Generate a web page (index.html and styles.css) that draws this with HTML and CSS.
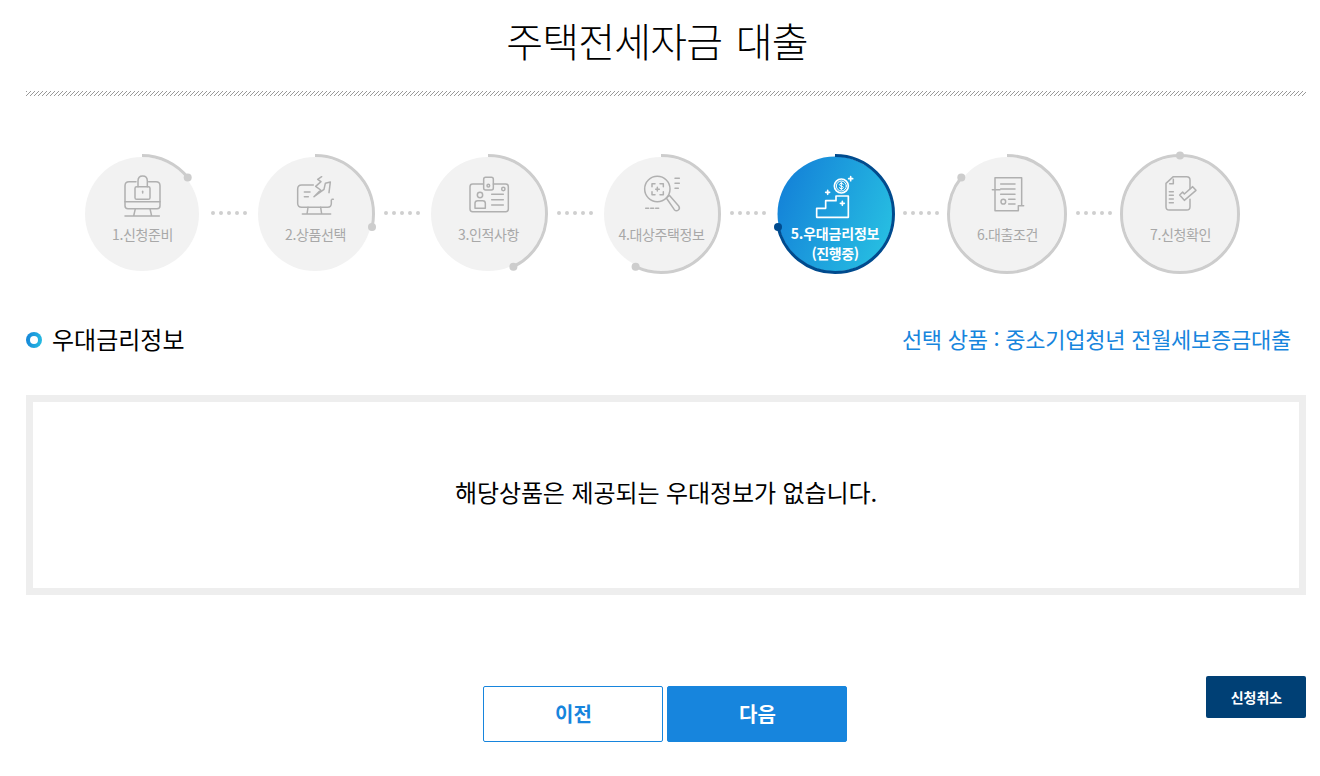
FILE: index.html
```html
<!DOCTYPE html>
<html lang="ko">
<head>
<meta charset="utf-8">
<title>주택전세자금 대출</title>
<link rel="stylesheet" href="styles.css">
</head>
<body>
<main class="page">
  <h1 class="title">주택전세자금 대출</h1>
  <div class="hatch"></div>

  <ol class="steps">
    <li class="step">
      <div class="disc">
        <svg class="ring" viewBox="0 0 120 120">
          <circle class="bg" cx="60" cy="60" r="57"/>
          <circle class="arc" cx="60" cy="60" r="58.5" pathLength="7" stroke-dasharray="1 7" transform="rotate(-90 60 60)"/>
          <circle class="knob" cx="105.7" cy="23.5" r="4"/>
          <svg class="ico" x="0" y="0" width="120" height="120" viewBox="36 42 360 360">
            <path d="M198 125H177q-12 0-12 12V185H270V137q0-12-12-12H236"/>
            <path d="M165 185V197q0 9 9 9H261q9 0 9-9V185"/>
            <path d="M196 206L191 228M240 206L245 228M165 228H268"/>
            <rect x="195" y="140" width="45" height="38" rx="5"/>
            <path d="M204 140V123q0-15 14-15t14 15V140"/>
            <path d="M218 154v5"/>
          </svg>
        </svg>
        <span class="label">1.신청준비</span>
      </div>
      <div class="dots"><i></i><i></i><i></i><i></i><i></i></div>
    </li>
    <li class="step">
      <div class="disc">
        <svg class="ring" viewBox="0 0 120 120">
          <circle class="bg" cx="60" cy="60" r="57"/>
          <circle class="arc" cx="60" cy="60" r="58.5" pathLength="7" stroke-dasharray="2 7" transform="rotate(-90 60 60)"/>
          <circle class="knob" cx="117" cy="73" r="4"/>
          <svg class="ico" x="0" y="0" width="120" height="120" viewBox="555 42 360 360">
            <path d="M730 135H695q-12 0-12 12V190q0 12 12 12H773q11 0 11-12V180"/>
            <path d="M714 202L711 222M752 202L755 222M697 222H782"/>
            <path d="M703 156H720M703 170H715"/>
            <path d="M732 170L752 150L737 139L753 125L743 118L755 110M732 170L762 148L766 130L781 126L777 158"/>
            <path d="M786 178H790"/>
          </svg>
        </svg>
        <span class="label">2.상품선택</span>
      </div>
      <div class="dots"><i></i><i></i><i></i><i></i><i></i></div>
    </li>
    <li class="step">
      <div class="disc">
        <svg class="ring" viewBox="0 0 120 120">
          <circle class="bg" cx="60" cy="60" r="57"/>
          <circle class="arc" cx="60" cy="60" r="58.5" pathLength="7" stroke-dasharray="3 7" transform="rotate(-90 60 60)"/>
          <circle class="knob" cx="85.4" cy="112.7" r="4"/>
          <svg class="ico" x="0" y="0" width="120" height="120" viewBox="24 42 360 360">
            <path d="M190 132H158q-8 0-8 8V207q0 8 8 8H257q8 0 8-8V140q0-8-8-8H220"/>
            <rect x="191" y="112" width="29" height="38" rx="6"/>
            <circle cx="205" cy="137" r="4"/>
            <circle cx="250" cy="147" r="5"/>
            <circle cx="180" cy="165" r="8"/>
            <path d="M165 205V190q0-8 8-8h15q8 0 8 8v15Z"/>
            <path d="M215 163H250M215 179H250M215 195H250"/>
          </svg>
        </svg>
        <span class="label">3.인적사항</span>
      </div>
      <div class="dots"><i></i><i></i><i></i><i></i><i></i></div>
    </li>
    <li class="step step-wide">
      <div class="disc">
        <svg class="ring" viewBox="0 0 120 120">
          <circle class="bg" cx="60" cy="60" r="57"/>
          <circle class="arc" cx="60" cy="60" r="58.5" pathLength="7" stroke-dasharray="4 7" transform="rotate(-90 60 60)"/>
          <circle class="knob" cx="34.6" cy="112.7" r="4"/>
          <svg class="ico" x="0" y="0" width="120" height="120" viewBox="543 42 360 360">
            <circle cx="712" cy="147" r="38"/>
            <path d="M739 174L748 166L776 198q5 7-1 12t-12-1Z"/>
            <path d="M696 140V131H705M720 131H730V140M696 155V164H705M720 164H730V155M707 148H718M712 142V153"/>
            <path d="M765 115H778M765 130H778M765 145H775"/>
            <path d="M677 205H686M692 205H701M707 205H716"/>
          </svg>
        </svg>
        <span class="label">4.대상주택정보</span>
      </div>
      <div class="dots"><i></i><i></i><i></i><i></i><i></i></div>
    </li>
    <li class="step step-narrow step-active">
      <div class="disc">
        <svg class="ring" viewBox="0 0 120 120">
          <defs>
            <linearGradient id="activeFill" x1="0" y1="0.3" x2="1" y2="0.7">
              <stop offset="0" stop-color="#1482d8"/>
              <stop offset="1" stop-color="#27bfe2"/>
            </linearGradient>
          </defs>
          <circle class="bg" cx="60" cy="60" r="57.5"/>
          <circle class="arc" cx="60" cy="60" r="58.5" pathLength="7" stroke-dasharray="5 7" transform="rotate(-90 60 60)"/>
          <circle class="knob" cx="3" cy="73" r="4"/>
          <svg class="ico" x="0" y="0" width="120" height="120" viewBox="45 42 360 360">
            <path d="M170 232V205H197V182H228V168H265V232Z"/>
            <circle cx="244" cy="138" r="21"/>
            <circle class="fine" cx="244" cy="138" r="15"/>
            <path class="fine" d="M250 133q-1-3-6-3t-6 3q0 4 6 5t6 5q0 3-6 3t-6-3M244 127V149"/>
            <path d="M197 157H209M203 151V163M266 116H278M272 110V122M241 190H253M247 184V196"/>
          </svg>
        </svg>
        <span class="label">5.우대금리정보<br><span class="sub">(진행중)</span></span>
      </div>
      <div class="dots"><i></i><i></i><i></i><i></i><i></i></div>
    </li>
    <li class="step">
      <div class="disc">
        <svg class="ring" viewBox="0 0 120 120">
          <circle class="bg" cx="60" cy="60" r="57"/>
          <circle class="arc" cx="60" cy="60" r="58.5" pathLength="7" stroke-dasharray="6 7" transform="rotate(-90 60 60)"/>
          <circle class="knob" cx="14.3" cy="23.5" r="4"/>
          <svg class="ico" x="0" y="0" width="120" height="120" viewBox="561 42 360 360">
            <path d="M705 148V113H785V197M697 149H720M705 149V212H775V197H791"/>
            <path d="M722 132H765M722 147H765M722 163H765"/>
            <circle cx="730" cy="185" r="7"/>
            <path d="M746 178H765M746 192H765"/>
          </svg>
        </svg>
        <span class="label">6.대출조건</span>
      </div>
      <div class="dots"><i></i><i></i><i></i><i></i><i></i></div>
    </li>
    <li class="step">
      <div class="disc">
        <svg class="ring" viewBox="0 0 120 120">
          <circle class="bg" cx="60" cy="60" r="57"/>
          <circle class="arc" cx="60" cy="60" r="58.5"/>
          <circle class="knob" cx="60" cy="1.5" r="4"/>
          <svg class="ico" x="0" y="0" width="120" height="120" viewBox="180 42 360 360">
            <path d="M390 146V120q0-10-10-10H340L318 130V200q0 10 10 10H380q10 0 10-10V178"/>
            <path d="M329 131H340V118"/>
            <path d="M328 155H340M328 166H340M328 177H340M328 188H340"/>
            <path d="M359 165L373 181L408 151L398 140L373 162L368 156Z"/>
          </svg>
        </svg>
        <span class="label">7.신청확인</span>
      </div>
    </li>
  </ol>

  <section class="section">
    <div class="section-head">
      <h2 class="section-title"><span class="bullet"></span>우대금리정보</h2>
      <p class="product">선택 상품 : 중소기업청년 전월세보증금대출</p>
    </div>
    <div class="notice">해당상품은 제공되는 우대정보가 없습니다.</div>
  </section>

  <div class="actions">
    <div class="nav">
      <button class="btn btn-line" type="button">이전</button>
      <button class="btn btn-fill" type="button">다음</button>
    </div>
    <button class="btn-cancel" type="button">신청취소</button>
  </div>
</main>
</body>
</html>
```

FILE: styles.css
```css
* { box-sizing: border-box; }

html, body {
  margin: 0;
  padding: 0;
  background: #fff;
}

body {
  font-family: "Noto Sans CJK KR", "Noto Sans", sans-serif;
  color: #000;
  overflow: hidden;
}

.page {
  width: 1320px;
  height: 776px;
  padding: 0 14px 0 26px;
}

.title {
  margin: 0;
  height: 91px;
  padding: 11px 18px 0 0;
  font-size: 40px;
  line-height: 58px;
  font-weight: 300;
  letter-spacing: -0.8px;
  word-spacing: 3px;
  text-align: center;
}

.hatch {
  height: 5px;
  background-image: linear-gradient(-45deg, transparent 0 30%, #999 30% 50%, transparent 50% 80%, #999 80%);
  background-size: 4px 4px;
}

.steps {
  list-style: none;
  margin: 58px 0 0;
  padding: 0 0 0 56px;
  display: flex;
  height: 120px;
}

.step {
  flex: 0 0 173px;
  display: flex;
  align-items: center;
}

.step-wide { flex-basis: 174px; }
.step-narrow { flex-basis: 172px; }

.disc {
  position: relative;
  flex: 0 0 120px;
  width: 120px;
  height: 120px;
}

.ring {
  display: block;
  width: 120px;
  height: 120px;
  overflow: visible;
}

.bg { fill: #f2f2f2; }

.arc {
  fill: none;
  stroke: #cdcdcd;
  stroke-width: 3;
}

.knob { fill: #cdcdcd; }

.ico * {
  fill: none;
  stroke: #b0b0b0;
  stroke-width: 4.5;
  stroke-linecap: round;
  stroke-linejoin: round;
}

.label {
  position: absolute;
  left: 1px;
  right: 0;
  top: 70px;
  text-align: center;
  font-size: 14px;
  line-height: 20px;
  letter-spacing: -0.4px;
  color: #a8a8a8;
}

.step-active .bg { fill: url(#activeFill); }
.step-active .arc { stroke: #004b8e; }
.step-active .knob { fill: #004b8e; }
.step-active .ico * { stroke: #fff; stroke-width: 5; }
.step-active .ico .fine { stroke-width: 3; }

.step-active .label {
  color: #fff;
  font-weight: 700;
  top: 69px;
  line-height: 20px;
  letter-spacing: -0.2px;
  left: 0;
}

.step-active .sub { font-size: 14px; letter-spacing: -0.4px; }

.dots {
  display: flex;
  gap: 4px;
  margin: -2px 0 0 9px;
}

.step-narrow .dots { margin-left: 8px; }

.dots i {
  display: block;
  width: 4px;
  height: 4px;
  border-radius: 50%;
  background: #cfcfcf;
}

.section { margin-top: 46px; }

.section-head {
  display: flex;
  align-items: center;
  justify-content: space-between;
  height: 38px;
  padding-right: 15px;
}

.section-title {
  margin: 0;
  display: flex;
  align-items: center;
  gap: 10px;
  font-size: 24px;
  line-height: 36px;
  font-weight: 400;
}

.bullet {
  position: relative;
  display: block;
  width: 16px;
  height: 16px;
  margin-top: 2px;
  border-radius: 50%;
  background: linear-gradient(100deg, #1482d8, #27bfe2);
}

.bullet::after {
  content: "";
  position: absolute;
  inset: 4px;
  border-radius: 50%;
  background: #fff;
}

.product {
  margin: 0 0 2px;
  font-size: 22px;
  line-height: 36px;
  letter-spacing: -0.26px;
  color: #1785dd;
}

.notice {
  margin-top: 37px;
  height: 200px;
  padding-bottom: 6px;
  border: 7px solid #eeeeee;
  display: flex;
  align-items: center;
  justify-content: center;
  font-size: 24px;
  line-height: 36px;
  letter-spacing: -0.1px;
}

.actions {
  margin-top: 81px;
  display: grid;
  grid-template-columns: 1fr auto 1fr;
  align-items: start;
  height: 66px;
}

.nav {
  grid-column: 2;
  display: flex;
  gap: 4px;
  margin: 10px 2px 0 0;
}

.btn {
  width: 180px;
  height: 56px;
  padding: 0 0 1px 1px;
  border: 1px solid #1785dd;
  border-radius: 2px;
  font: 700 20px/1 "Noto Sans CJK KR", "Noto Sans", sans-serif;
}

.btn-line {
  background: #fff;
  color: #1785dd;
}

.btn-fill {
  background: #1785dd;
  color: #fff;
}

.btn-cancel {
  grid-column: 3;
  justify-self: end;
  width: 100px;
  height: 42px;
  padding: 0 0 0 1px;
  border: 0;
  border-radius: 2px;
  background: #004075;
  color: #fff;
  font: 700 14px/1 "Noto Sans CJK KR", "Noto Sans", sans-serif;
}
```
